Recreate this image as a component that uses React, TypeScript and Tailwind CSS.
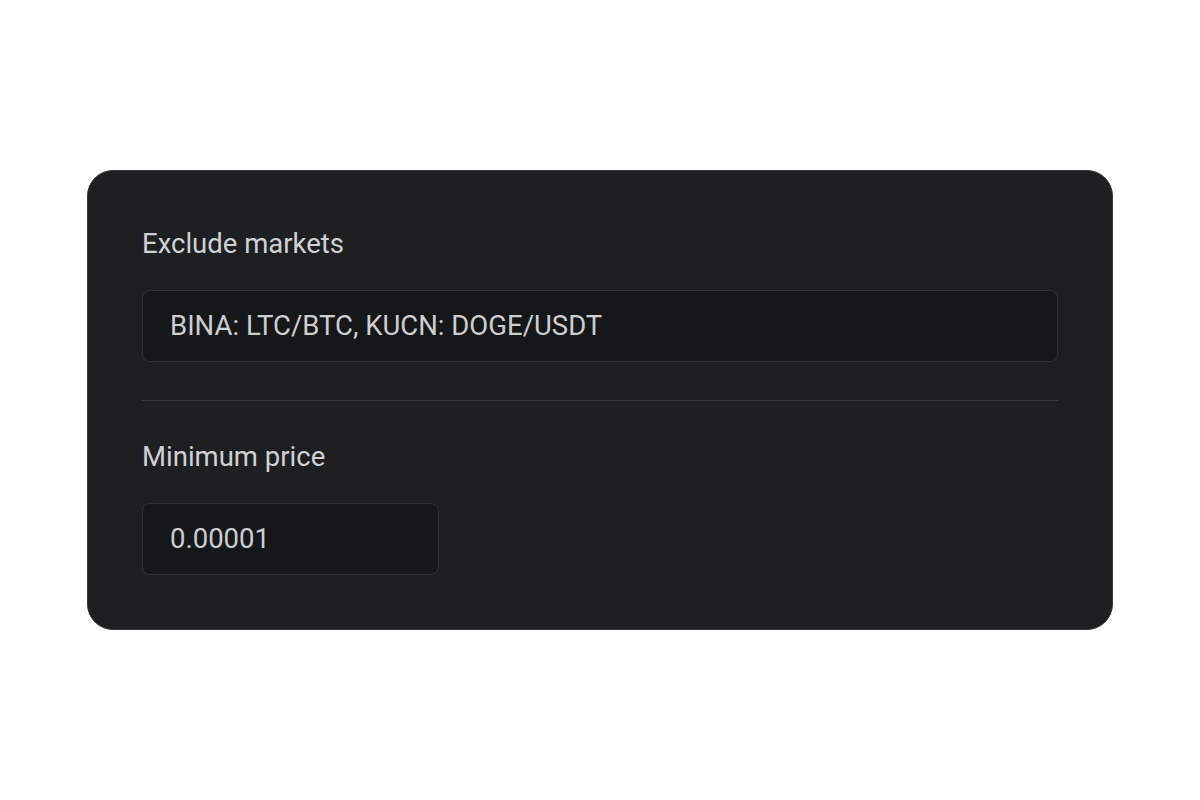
import React from "react";

export default function App() {
  return (
    <div className="w-[1200px] h-[800px] bg-white flex items-center justify-center" style={{ fontFamily: "Roboto, 'Noto Sans', sans-serif" }}>
      <div className="w-[1026px] h-[460px] rounded-[26px] bg-[#1e1f21] border border-[#333436] px-[54px] pt-[55px] pb-[53px] flex flex-col">
        <div className="text-[27.5px] leading-[36px] text-[#d0d1d3]">Exclude markets</div>
        <div className="mt-[28px] h-[72px] rounded-[8px] bg-[#161719] border border-[#303134] flex items-center px-[27px] text-[27.5px] text-[#cdcecf]">
          BINA: LTC/BTC, KUCN: DOGE/USDT
        </div>
        <div className="mt-[38px] h-px bg-[#3a3b3e]" />
        <div className="mt-[38px] text-[27.5px] leading-[36px] text-[#d0d1d3]">Minimum price</div>
        <div className="mt-[28px] w-[297px] h-[72px] rounded-[8px] bg-[#161719] border border-[#303134] flex items-center px-[27px] text-[27.5px] text-[#cdcecf]">
          0.00001
        </div>
      </div>
    </div>
  );
}
